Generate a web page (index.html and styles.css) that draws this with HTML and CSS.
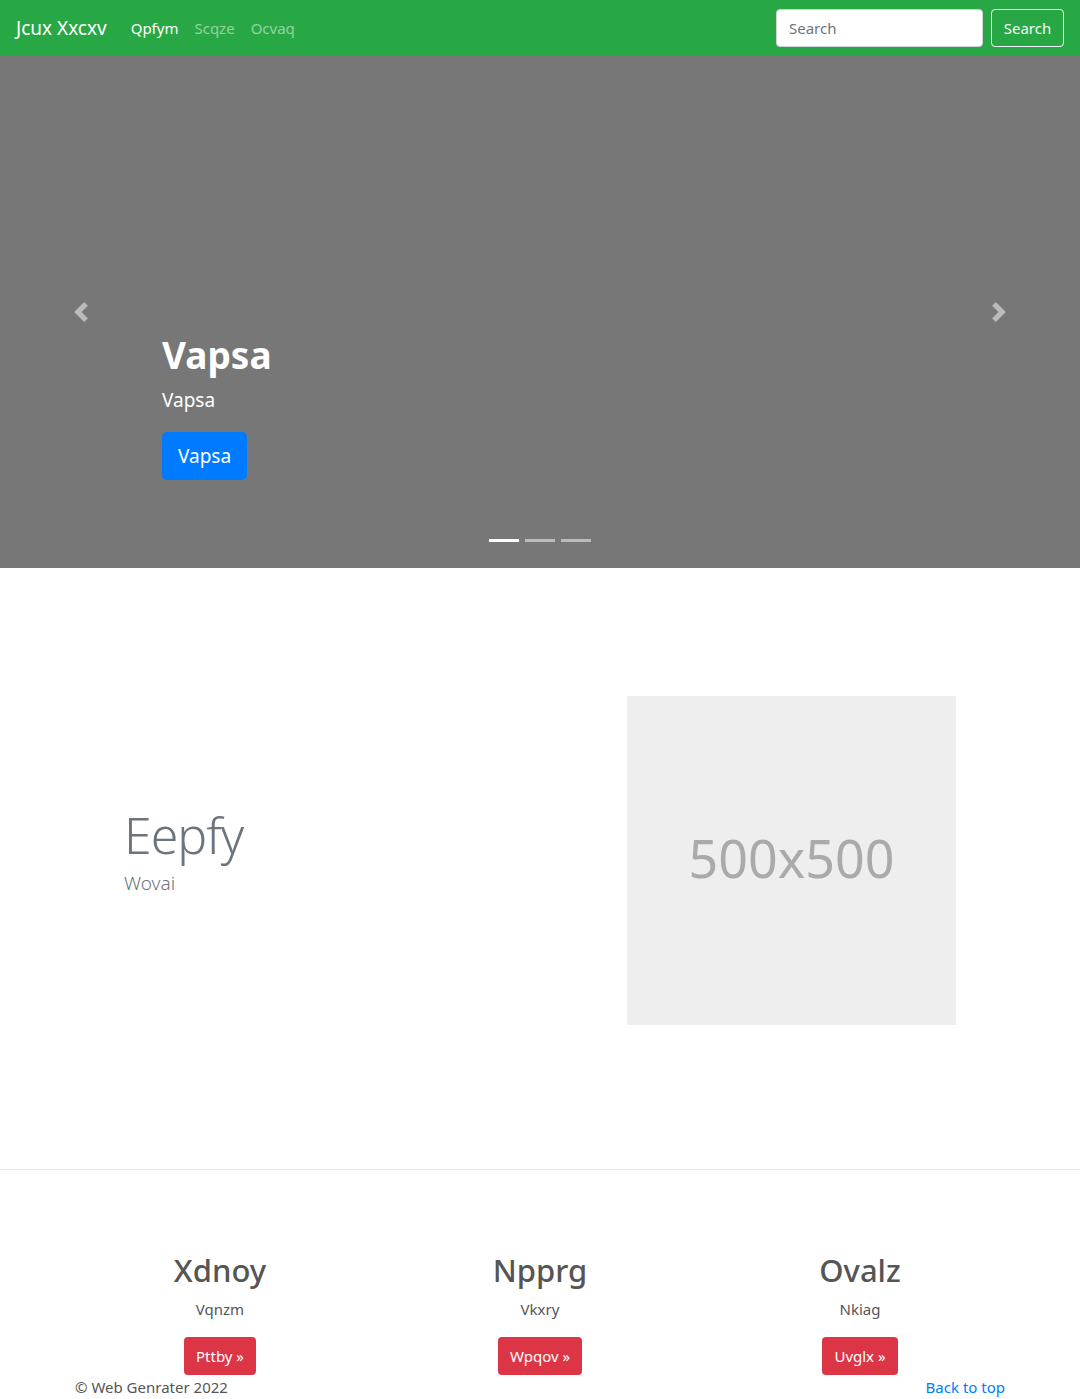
FILE: index.html
```html
<!DOCTYPE html>
<html lang="en">
<head>
<meta charset="utf-8">
<title>Jcux Xxcxv</title>
<link rel="stylesheet" href="styles.css">
</head>
<body>
<header class="navbar">
  <a class="brand" href="#">Jcux Xxcxv</a>
  <nav class="nav">
    <a class="nav-link active" href="#">Qpfym</a>
    <a class="nav-link" href="#">Scqze</a>
    <a class="nav-link" href="#">Ocvaq</a>
  </nav>
  <form class="search">
    <input class="search-input" type="text" placeholder="Search">
    <button class="btn-outline" type="button">Search</button>
  </form>
</header>

<section class="carousel">
  <a class="control prev" href="#"><svg width="20" height="20" viewBox="0 0 8 8"><path fill="#fff" d="M5.25 0l-4 4 4 4 1.5-1.5L4.25 4l2.5-2.5L5.25 0z"/></svg></a>
  <a class="control next" href="#"><svg width="20" height="20" viewBox="0 0 8 8"><path fill="#fff" d="M2.75 0l-1.5 1.5L3.75 4l-2.5 2.5L2.75 8l4-4-4-4z"/></svg></a>
  <div class="caption">
    <h1 class="caption-title">Vapsa</h1>
    <p class="caption-text">Vapsa</p>
    <a class="btn-primary" href="#">Vapsa</a>
  </div>
  <ol class="indicators">
    <li class="ind active"></li>
    <li class="ind"></li>
    <li class="ind"></li>
  </ol>
</section>

<section class="featurette">
  <div class="feat-text">
    <h2 class="feat-heading">Eepfy</h2>
    <p class="feat-lead">Wovai</p>
  </div>
  <div class="feat-img"><span>500x500</span></div>
</section>

<hr class="divider">

<section class="marketing">
  <div class="col">
    <h2 class="col-title">Xdnoy</h2>
    <p class="col-text">Vqnzm</p>
    <a class="btn-danger" href="#">Pttby &raquo;</a>
  </div>
  <div class="col">
    <h2 class="col-title">Npprg</h2>
    <p class="col-text">Vkxry</p>
    <a class="btn-danger" href="#">Wpqov &raquo;</a>
  </div>
  <div class="col">
    <h2 class="col-title">Ovalz</h2>
    <p class="col-text">Nkiag</p>
    <a class="btn-danger" href="#">Uvglx &raquo;</a>
  </div>
</section>

<footer class="footer">
  <p class="copy">&copy; Web Genrater 2022</p>
  <a class="top-link" href="#">Back to top</a>
</footer>
</body>
</html>
```

FILE: styles.css
```css
* { box-sizing: border-box; }
html, body { margin: 0; padding: 0; }
body {
  font-family: "Noto Sans", "Open Sans", sans-serif;
  font-size: 16px;
  line-height: 1.5;
  color: #555;
  background: #fff;
}
a { text-decoration: none; }

.navbar {
  height: 56px;
  background: #28a745;
  display: flex;
  align-items: center;
  padding: 0 16px;
}
.brand {
  color: #fff;
  font-size: 19px;
  line-height: 30px;
  margin-right: 16px;
}
.nav { display: flex; flex: 1; }
.nav-link {
  color: rgba(255,255,255,.5);
  padding: 8px;
  font-size: 15px;
}
.nav-link.active { color: #fff; }
.search { display: flex; align-items: center; }
.search-input {
  width: 207px;
  height: 38px;
  border: 1px solid #ced4da;
  border-radius: 4px;
  padding: 6px 12px;
  font-family: inherit;
  font-size: 15px;
  color: #495057;
  margin-right: 8px;
}
.search-input::placeholder { color: #6c757d; }
.btn-outline {
  height: 38px;
  width: 73px;
  background: transparent;
  border: 1px solid #f8f9fa;
  color: #f8f9fa;
  border-radius: 4px;
  padding: 6px 0;
  font-family: inherit;
  font-size: 15px;
}

.carousel {
  position: relative;
  height: 512px;
  background: #777;
}
.control {
  position: absolute;
  top: 0;
  bottom: 0;
  width: 162px;
  display: flex;
  align-items: center;
  justify-content: center;
  opacity: .5;
}
.prev { left: 0; }
.next { right: 0; }
.caption {
  position: absolute;
  left: 162px;
  right: 162px;
  bottom: 88px;
  color: #fff;
}
.caption-title {
  margin: 0 0 8px;
  font-size: 37px;
  font-weight: 700;
  line-height: 1.2;
}
.caption-text {
  margin: 0 0 17px;
  font-size: 19px;
  line-height: 30px;
}
.btn-primary {
  display: inline-block;
  background: #007bff;
  color: #fff;
  font-size: 19px;
  line-height: 30px;
  padding: 9px 16px;
  border-radius: 5px;
}
.indicators {
  position: absolute;
  left: 0;
  right: 0;
  bottom: 26px;
  margin: 0;
  padding: 0;
  list-style: none;
  display: flex;
  justify-content: center;
}
.ind {
  width: 30px;
  height: 3px;
  margin: 0 3px;
  background: #fff;
  opacity: .5;
}
.ind.active { opacity: 1; }

.featurette {
  display: flex;
  align-items: center;
  padding: 128px 0 144px 124px;
}
.feat-text { width: 503px; padding-bottom: 20px; }
.feat-heading {
  margin: 0;
  font-size: 50px;
  font-weight: 300;
  line-height: 1.1;
  letter-spacing: -1px;
  color: #6c757d;
}
.feat-lead {
  margin: 11px 0 0;
  font-size: 19px;
  font-weight: 300;
  line-height: 1;
  color: #6c757d;
}
.feat-img {
  width: 329px;
  height: 329px;
  background: #eee;
  display: flex;
  align-items: center;
  justify-content: center;
}
.feat-img span {
  font-size: 52px;
  color: #aaa;
  padding-bottom: 6px;
}

.divider {
  margin: 0;
  border: 0;
  border-top: 1px solid rgba(0,0,0,.1);
}

.marketing {
  display: flex;
  width: 960px;
  margin: 0 auto;
  padding-top: 82px;
}
.col {
  flex: 1;
  display: flex;
  flex-direction: column;
  align-items: center;
}
.col-title {
  margin: 0 0 8px;
  font-size: 31px;
  font-weight: 500;
  line-height: 1.2;
  color: #555;
}
.col-text {
  margin: 0 0 16px;
  font-size: 15px;
  line-height: 24px;
  color: #555;
}
.btn-danger {
  display: inline-block;
  background: #dc3545;
  color: #fff;
  font-size: 15px;
  line-height: 24px;
  padding: 7px 12px;
  border-radius: 4px;
}

.footer {
  width: 960px;
  margin: 0 auto;
  padding: 0 15px;
  display: flex;
  justify-content: space-between;
}
.copy { margin: 0; line-height: 24px; font-size: 15px; }
.top-link { color: #007bff; line-height: 24px; font-size: 15px; }
```
